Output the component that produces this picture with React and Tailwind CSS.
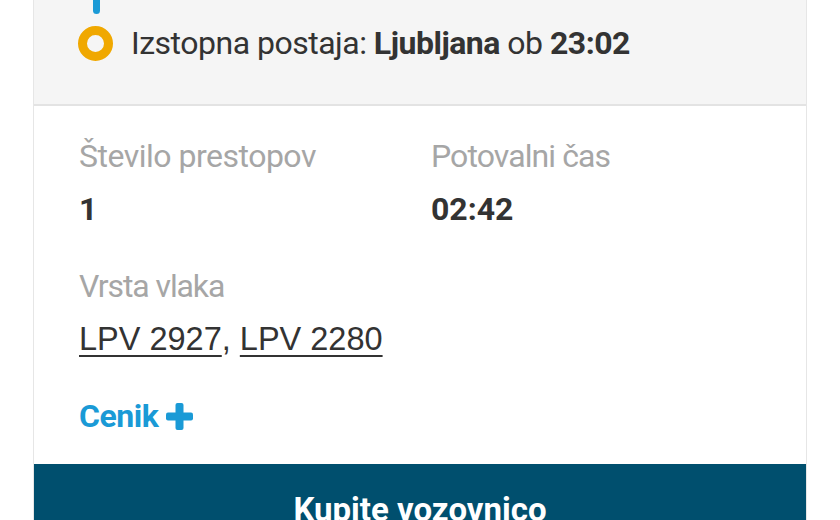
export default function App() {
  return (
    <div className="min-h-[520px] bg-white font-['Roboto',sans-serif] text-[#333333]">
      <div className="ml-[33px] w-[774px] border-x border-[#e6e6e6]">
        <div className="h-[106px] border-b-2 border-[#e3e3e3] bg-[#f5f5f5] pl-[44px]">
          <div className="ml-[15px] h-[14px] w-[7px] rounded-b-full bg-[#1a9ad6]" />
          <div className="mt-[11px] flex items-center gap-[18px]">
            <div className="h-[35px] w-[35px] rounded-full border-[9px] border-[#f0a800]" />
            <div className="text-[32px] leading-[36px] tracking-[-0.5px]">
              Izstopna postaja: <span className="font-bold">Ljubljana</span> ob{" "}
              <span className="font-bold">23:02</span>
            </div>
          </div>
        </div>
        <div className="px-[45px] pt-[32px] pb-[30px]">
          <div className="grid grid-cols-[352px_1fr]">
            <div>
              <div className="text-[32px] leading-[36px] tracking-[-0.5px] text-[#a6a6a6]">Število prestopov</div>
              <div className="mt-[17px] text-[32px] font-bold leading-[36px]">1</div>
            </div>
            <div>
              <div className="text-[32px] leading-[36px] tracking-[-0.9px] text-[#a6a6a6]">Potovalni čas</div>
              <div className="mt-[17px] text-[32px] font-bold leading-[36px]">02:42</div>
            </div>
          </div>
          <div className="mt-[41px] text-[32px] leading-[36px] tracking-[-1.1px] text-[#a6a6a6]">Vrsta vlaka</div>
          <div className="mt-[17px] font-['Liberation_Sans',sans-serif] text-[32.5px] leading-[36px]">
            <span className="underline decoration-2 underline-offset-[5px]">LPV 2927</span>,{" "}
            <span className="underline decoration-2 underline-offset-[5px]">LPV 2280</span>
          </div>
          <div className="mt-[41px] flex items-center gap-[8px] text-[32px] font-bold leading-[36px] tracking-[-0.5px] text-[#1a9ad6]">
            <span>Cenik</span>
            <svg width="27" height="27" viewBox="0 0 27 27" className="mt-[1px]">
              <rect x="9.5" y="0" width="8" height="27" rx="2" fill="#1a9ad6" />
              <rect x="0" y="9.5" width="27" height="8" rx="2" fill="#1a9ad6" />
            </svg>
          </div>
        </div>
        <div className="h-[56px] bg-[#004f6e] pt-[28px] text-center text-[33px] font-bold leading-[36px] text-white">
          Kupite vozovnico
        </div>
      </div>
    </div>
  );
}
